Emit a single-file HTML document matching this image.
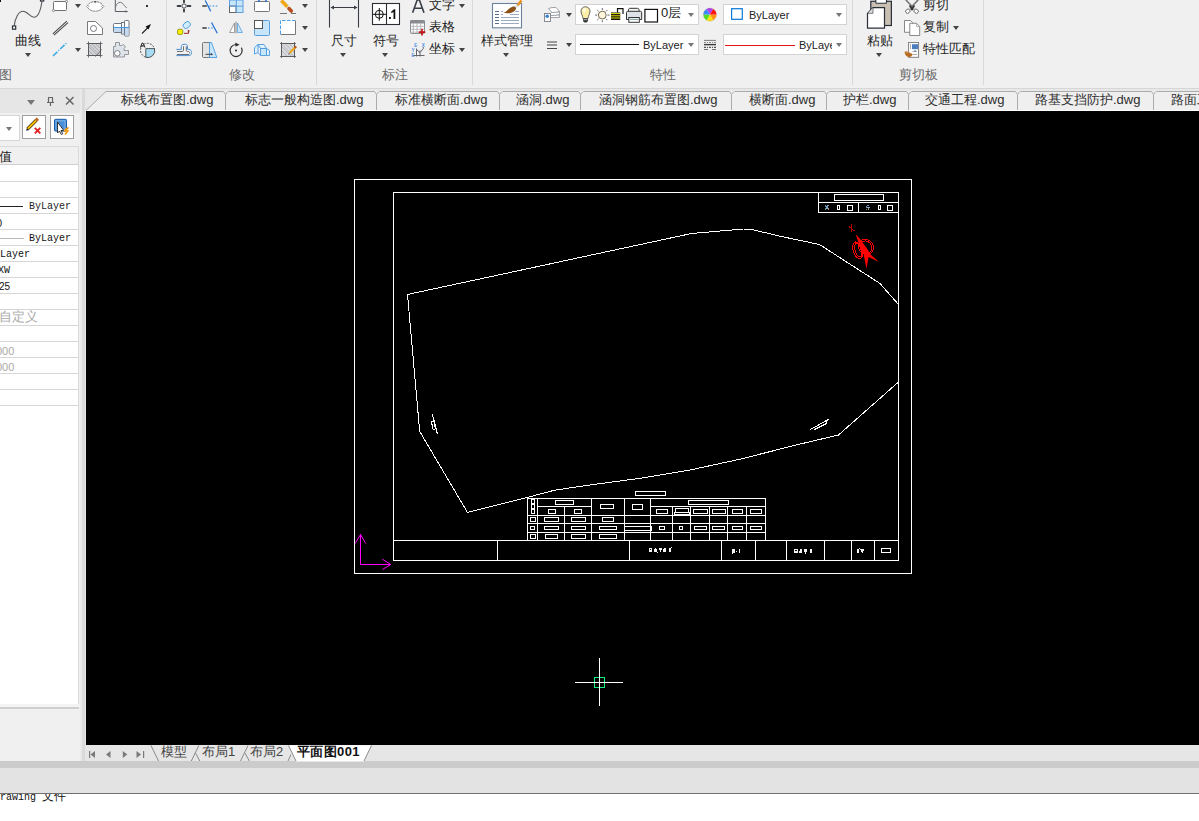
<!DOCTYPE html>
<html><head><meta charset="utf-8">
<style>
*{box-sizing:border-box}
html,body{margin:0;padding:0}
body{width:1199px;height:821px;overflow:hidden;position:relative;background:#f0f0f0;font-family:"Liberation Sans",sans-serif;color:#333}
.a{position:absolute}
.t{position:absolute;white-space:nowrap;font-size:13px;line-height:14px;color:#1e1e1e}
.lbl{position:absolute;white-space:nowrap;font-size:13px;line-height:14px;color:#686868;top:68px}
.sep{position:absolute;top:0;width:1px;height:85px;background:#d9d9d9}
.dd{position:absolute;width:0;height:0;border-left:3.5px solid transparent;border-right:3.5px solid transparent;border-top:4px solid #444}
.combo{position:absolute;background:#fff;border:1px solid #d3d3d3}
.tab{position:absolute;top:93px;white-space:nowrap;font-size:13px;line-height:14px;color:#2e2e2e}
.row{position:absolute;left:0;width:78px;height:16px;border-bottom:1px solid #d4d4d4}
.pv{position:absolute;white-space:nowrap;font-family:"Liberation Mono",monospace;font-size:10px;line-height:12px;color:#222}
</style></head><body>
<!-- ribbon -->
<div class="a" style="left:0;top:0;width:1199px;height:88px;background:#f0f0f0"></div>
<div class="a" style="left:0;top:88px;width:1199px;height:1px;background:#d6d6d6"></div>
<div class="sep" style="left:166px"></div>
<div class="sep" style="left:316px"></div>
<div class="sep" style="left:472px"></div>
<div class="sep" style="left:852px"></div>
<div class="sep" style="left:983px"></div>
<div class="lbl" style="left:-1px">图</div>
<div class="lbl" style="left:229px">修改</div>
<div class="lbl" style="left:382px">标注</div>
<div class="lbl" style="left:650px">特性</div>
<div class="lbl" style="left:899px">剪切板</div>

<!-- layout tab bar -->
<div class="a" style="left:86px;top:745px;width:1113px;height:16px;background:#e6e6e6"></div>
<!-- status -->
<div class="a" style="left:0;top:761px;width:1199px;height:7px;background:#cbcbcb"></div>
<div class="a" style="left:0;top:768px;width:1199px;height:25px;background:#e3e3e3"></div>
<div class="a" style="left:0;top:793px;width:1199px;height:1px;background:#707070"></div>
<div class="a" style="left:0;top:794px;width:1199px;height:27px;background:#fff"></div>


<!-- ribbon texts -->
<div class="t" style="left:15px;top:34px">曲线</div>
<div class="dd" style="left:25px;top:53px"></div>
<div class="dd" style="left:75px;top:4px"></div>
<div class="dd" style="left:75px;top:48px"></div>
<div class="dd" style="left:302px;top:4px"></div>
<div class="dd" style="left:302px;top:26px"></div>
<div class="dd" style="left:302px;top:48px"></div>
<div class="t" style="left:331px;top:34px">尺寸</div>
<div class="dd" style="left:340px;top:53px"></div>
<div class="t" style="left:373px;top:34px">符号</div>
<div class="dd" style="left:382px;top:53px"></div>
<div class="t" style="left:429px;top:-2px">文字</div>
<div class="dd" style="left:459px;top:4px"></div>
<div class="t" style="left:429px;top:20px">表格</div>
<div class="t" style="left:429px;top:42px">坐标</div>
<div class="dd" style="left:459px;top:48px"></div>
<div class="t" style="left:481px;top:34px">样式管理</div>
<div class="dd" style="left:503px;top:53px"></div>
<div class="dd" style="left:566px;top:13px"></div>
<div class="dd" style="left:566px;top:43px"></div>
<div class="combo" style="left:575px;top:4px;width:124px;height:21px"></div>
<div class="combo" style="left:575px;top:34px;width:124px;height:21px"></div>
<div class="combo" style="left:723px;top:4px;width:124px;height:21px"></div>
<div class="combo" style="left:723px;top:34px;width:124px;height:21px;overflow:hidden"></div>
<div class="t" style="left:661px;top:6px;font-size:13px;color:#1a1a1a">0层</div>
<div class="dd" style="left:688px;top:13px;border-top-color:#777"></div>
<div class="t" style="left:643px;top:38px;font-size:11px;color:#222">ByLayer</div>
<div class="dd" style="left:688px;top:43px;border-top-color:#777"></div>
<div class="t" style="left:749px;top:8px;font-size:11px;color:#222">ByLayer</div>
<div class="dd" style="left:836px;top:13px;border-top-color:#777"></div>
<div class="a" style="left:799px;top:38px;width:33px;height:15px;overflow:hidden"><div class="t" style="left:0;top:0;font-size:11px;color:#222">ByLayer</div></div>
<div class="dd" style="left:836px;top:43px;border-top-color:#777"></div>
<div class="t" style="left:867px;top:34px">粘贴</div>
<div class="dd" style="left:876px;top:53px"></div>
<div class="t" style="left:923px;top:-2px">剪切</div>
<div class="t" style="left:923px;top:20px">复制</div>
<div class="dd" style="left:953px;top:26px"></div>
<div class="t" style="left:923px;top:42px">特性匹配</div>
<!-- ribbon icons -->
<svg class="a" style="left:0;top:0" width="1199" height="88" viewBox="0 0 1199 88">
<!-- spline -->
<path d="M14 27C15 18 18.5 11.3 23 11.3C27.5 11.3 30 17.3 34 17.3C39 17.3 41 8 42 1" fill="none" stroke="#5a5a5a" stroke-width="1.1"/>
<rect x="12.5" y="26" width="3.2" height="3.2" fill="#fff" stroke="#2a2f38" stroke-width="1.2"/>
<rect x="40.5" y="-1.5" width="3.2" height="2.5" fill="#fff" stroke="#2a2f38" stroke-width="1.2"/>
<rect x="0" y="0" width="1" height="2" fill="#111"/>
<!-- rect -->
<rect x="53.5" y="1.5" width="13" height="9" rx="1" fill="#fff" stroke="#6e7074"/>
<circle cx="66.5" cy="1.5" r="1.1" fill="#fff" stroke="#6e7074" stroke-width=".8"/>
<circle cx="53.5" cy="10.5" r="1.1" fill="#fff" stroke="#6e7074" stroke-width=".8"/>
<!-- ellipse -->
<ellipse cx="95.2" cy="6.4" rx="7.6" ry="4.8" fill="#fff" stroke="#6e7074" stroke-width=".9" stroke-dasharray="2.5 .6"/>
<rect x="94.2" y="1" width="2" height="1.6" fill="#555"/>
<path d="M87.6 5.2L88.8 6.4L87.6 7.6L86.4 6.4Z" fill="#fff" stroke="#6e7074" stroke-width=".6"/>
<path d="M102.8 5.2L104 6.4L102.8 7.6L101.6 6.4Z" fill="#fff" stroke="#6e7074" stroke-width=".6"/>
<!-- curve chart -->
<path d="M115.3 0V11.5H127.5" fill="none" stroke="#5a5e64" stroke-width="1"/>
<path d="M127.8 11.5L125.5 10.2V12.8Z" fill="#5a5e64"/>
<path d="M115.5 7C116.5 3.5 118.5 2.3 120.5 2.3C123 2.3 124 6.5 126.8 7.8" fill="none" stroke="#6a6e74" stroke-width=".9"/>
<!-- dot -->
<rect x="146" y="5" width="2" height="2" fill="#333"/>
<!-- double line -->
<path d="M52.8 33.8L66.8 21.2M54 35.2L68 22.6" fill="none" stroke="#4a4a4a" stroke-width="1.1"/>
<!-- polygon circle -->
<path d="M87.5 21.5H95.5L102.5 28V34.5H87.5Z" fill="#fff" stroke="#76787c"/>
<circle cx="93.5" cy="28.5" r="3" fill="none" stroke="#76787c"/>
<!-- blocks -->
<path d="M114.5 23.5H121.5V32.5H114.5C113.8 32.5 113.5 32 113.5 31.5V24.5C113.5 24 113.8 23.5 114.5 23.5Z" fill="#fff" stroke="#6e7680"/>
<rect x="114" y="28" width="7" height="4" fill="#c5daf0"/>
<rect x="121.5" y="22.5" width="3" height="11.5" fill="#fff" stroke="#6e7680"/>
<rect x="122" y="28" width="2" height="5.5" fill="#c5daf0"/>
<rect x="124.5" y="20.5" width="4.5" height="15.5" rx=".8" fill="#fff" stroke="#6e7680"/>
<rect x="125" y="28" width="3.5" height="7.5" fill="#c5daf0"/>
<path d="M113.5 27.5H129" stroke="#4a9ae0" stroke-width="1.1"/>
<!-- arrow -->
<path d="M142 33.5L148 27.5" stroke="#222" stroke-width="1.1"/>
<path d="M151 24L145.5 26.5L148.5 29.5Z" fill="#111"/>
<!-- dashed blue line -->
<path d="M53 56L66.5 43" stroke="#3aa8e8" stroke-width="1.5" stroke-dasharray="6 1.5 1 1.5"/>
<!-- hatch -->
<rect x="88.5" y="43.5" width="12" height="12" fill="#cfd1d4" stroke="#6a6a6a" stroke-width=".9"/>
<path d="M89 47L97 55M89 51L93 55M92 44L100.5 52.5M96 44L100.5 48.5M89 44.5L99.5 55" stroke="#a0a2a5" stroke-width=".7"/>
<path d="M86.5 43.5H102.5M86.5 55.5H102.5M88.5 41.5V57.5M100.5 41.5V57.5" stroke="#555" stroke-width=".8"/>
<path d="M95 56.5C97 55 99.5 53 101.5 49" stroke="#555" stroke-width=".8" fill="none"/>
<!-- gear -->
<path d="M113.5 46.5H115.5V42.5H119.5V45.5H121.5L123.5 44.5L125.5 47L124 48.5V50.5H128.5V54.5H124.5V57H113.5Z" fill="#dfe3ea" stroke="#8a8e94" stroke-width=".9" stroke-linejoin="round"/>
<circle cx="117.3" cy="53.3" r="2.8" fill="#fff" stroke="#7a7e84" stroke-width="1"/>
<!-- A circle -->
<circle cx="147.5" cy="50.3" r="7" fill="none" stroke="#444" stroke-width=".9" stroke-dasharray="2 1.2"/>
<path d="M145.8 48.6H154.5A7 7 0 0 1 145.8 57.3Z" fill="#a8dcf5"/>
<path d="M154.5 48.6A7 7 0 0 1 145.8 57.3" fill="none" stroke="#444" stroke-width=".9"/>
<path d="M145.8 48.6H154.5M145.8 48.6V57.3" stroke="#333" stroke-width=".8"/>
<path d="M140.3 47.5L142.2 43H143L145 47.5M141.2 46H144.1" fill="none" stroke="#222" stroke-width="1"/>
<!-- MODIFY group -->
<!-- move -->
<path d="M184 0.3V2.6M184 9.3V11.6M177.6 6H180.7M187.3 6H190.4" stroke="#3a3e44" stroke-width="1.9" stroke-linecap="round"/>
<rect x="182.3" y="4.3" width="3.5" height="3.4" fill="#fff" stroke="#6a6e74" stroke-width=".9"/>
<!-- trim -->
<path d="M202.3 6H206.7" stroke="#666" stroke-width="2"/>
<path d="M209.3 6H218" stroke="#6aaee8" stroke-width="1.6" stroke-dasharray="1.6 1.6"/>
<path d="M205.3 0.5L210.7 11.3" stroke="#1a6ad0" stroke-width="1.2"/>
<!-- array -->
<rect x="229.5" y="0" width="13.5" height="12.5" fill="#c8e6fa" stroke="#5aa0e0"/>
<rect x="229.5" y="6" width="6.5" height="6.5" fill="#fff" stroke="#666"/>
<path d="M236.3 0V12.5M229.5 6.2H243" stroke="#5aa0e0"/>
<!-- stretch box -->
<rect x="254.5" y="1.5" width="15" height="10" rx="1" fill="#fff" stroke="#777"/>
<path d="M259 0V2M266 0V2" stroke="#2a6ed0" stroke-width="1.5"/>
<!-- erase -->
<path d="M281.3 0.5L287.5 7" stroke="#f0a818" stroke-width="3.6"/>
<path d="M287.3 6.8L289.2 8.8" stroke="#e0e0e0" stroke-width="3.6"/>
<path d="M289 8.6L291.3 11" stroke="#b85020" stroke-width="3.6" stroke-linecap="round"/>
<path d="M280 13.5H287M291 13.5H296" stroke="#777" stroke-width="1"/>
<!-- offset copy -->
<rect x="183" y="22.3" width="7.5" height="5.5" rx="2.4" fill="#d0ecfc" stroke="#4a9ae0" stroke-width=".9" transform="rotate(-38 186.7 25)"/>
<rect x="177.5" y="29.2" width="5.3" height="5.3" rx="1.6" fill="#f8ee00" stroke="#8a8a10" stroke-width=".8"/>
<path d="M184 33.3H188.6V30.8" fill="none" stroke="#a02020" stroke-width="1"/>
<path d="M187.2 31.3L188.6 29.8L190 31.3Z" fill="#a02020"/>
<!-- extend -->
<path d="M202.3 28H206.7" stroke="#666" stroke-width="2"/>
<path d="M208 28H213" stroke="#6aaee8" stroke-width="1.6" stroke-dasharray="1.6 1.6"/>
<path d="M211.5 22.5L217.3 33.3" stroke="#1a6ad0" stroke-width="1.2"/>
<!-- mirror -->
<path d="M234.5 23L229.5 32.5H234.5Z" fill="#fff" stroke="#888" stroke-width=".8"/>
<path d="M236 21.5V33.5" stroke="#aaa" stroke-width="1.5"/>
<path d="M237.5 23L242.5 32.5H237.5Z" fill="#c8e6fa" stroke="#5aa0e0" stroke-width=".8"/>
<!-- scale -->
<rect x="254.5" y="20.5" width="15" height="15" rx="1" fill="#c8e6fa" stroke="#5aa0e0"/>
<rect x="254.5" y="20.5" width="8" height="8" fill="#fff" stroke="#555"/>
<!-- offset dashed -->
<rect x="280.5" y="20.5" width="15" height="14" fill="#fff" stroke="none"/>
<path d="M280.5 34.5H295.5V20.5" fill="none" stroke="#777" stroke-width="1"/>
<path d="M280.5 34V20.5H295" fill="none" stroke="#4aa0ea" stroke-width="1" stroke-dasharray="3.5 1.5"/>
<!-- fillet -->
<path d="M176.3 49.4H181.3V46.5C181.3 45 182.5 44.3 184 44.3H185.5C187 44.3 187.5 45.2 187.5 46.5V49.3H189C190.5 49.6 191.6 51 191.6 52.5C191.6 54.3 190.5 55.6 188.8 55.6H176.3" fill="none" stroke="#4a90d8" stroke-width="1"/>
<path d="M177 51.5H182.3C183 51.5 183.5 51 183.5 50.3V46.3M186.3 46.3V50.3C186.3 51 186.8 51.5 187.5 51.5H188.5C189.3 51.5 189.7 52.3 189.7 53.5M177 54.5H189" fill="none" stroke="#6a6e74" stroke-width="1"/>
<!-- stretch -->
<path d="M209.5 42.5H203.5C202.9 42.5 202.5 42.9 202.5 43.5V56.5C202.5 57.1 202.9 57.5 203.5 57.5H209.5Z" fill="#e3e3e3" stroke="#6a6a6a" stroke-width=".9"/>
<path d="M209.5 42.5H211.5L216.8 57.5H209.5Z" fill="#c8e6fa" stroke="#4a9ae0" stroke-width=".9"/>
<path d="M205.5 54.3H211.5" stroke="#333" stroke-width=".9"/>
<path d="M213 54.3L211 53V55.6Z" fill="#333"/>
<!-- rotate -->
<path d="M236 44.5A6 6 0 1 0 241.4 47.6" fill="none" stroke="#333" stroke-width="1.2"/>
<path d="M235.3 42.6L239.6 44.8L235.5 46.8Z" fill="#333"/>
<circle cx="236" cy="50.5" r="1" fill="#222"/>
<!-- 3d blocks -->
<g fill="#c8e6fa" stroke="#4a9ae0" stroke-width=".9" stroke-linejoin="round">
<path d="M254.5 47.5L258 44.5V52.5L254.5 54Z" fill="#dff0fb"/>
<path d="M258 44.5H264L266.5 48.5H260.5Z" fill="#dff0fb"/>
<rect x="260.5" y="48.5" width="6" height="7"/>
<path d="M266.5 48.5L269.5 50.5V55.5L266.5 55.5Z" fill="#dff0fb"/>
<path d="M258 52.5L260.5 55.5"/>
</g>
<!-- hatch edit -->
<rect x="281.5" y="43.5" width="13" height="13" fill="#d8dadd" stroke="#6a6a6a" stroke-width=".9"/>
<path d="M282 47L291.5 56.5M282 51L287.5 56.5M285.5 44L294.5 53M289.5 44L294.5 49M282 44.5L294 56.5" stroke="#a5a7aa" stroke-width=".7"/>
<path d="M280 43.5H296M280 56.5H296M281.5 42V58M294.5 42V58" stroke="#555" stroke-width=".8"/>
<path d="M289.5 53L295 47.5" stroke="#f0a818" stroke-width="2.2"/>
<path d="M294.6 48L296.2 46.4" stroke="#bb5520" stroke-width="2.2"/>
<path d="M288.5 54.5L289.5 53" stroke="#555" stroke-width=".8"/>
<!-- ANNOTATE -->
<path d="M329.5 0V27.6M358.5 0V27.6M331 7.5H357" stroke="#3a3e44" stroke-width="1.1"/>
<path d="M330.5 7.5L334 5.5V9.5ZM357.5 7.5L354 5.5V9.5Z" fill="#3a3e44"/>
<rect x="372.5" y="3.5" width="27" height="21" fill="#fff" stroke="#2a2e34" stroke-width="1.1"/>
<path d="M386.5 3.5V24.5" stroke="#2a2e34" stroke-width="1.1"/>
<circle cx="379.3" cy="14.3" r="4" fill="none" stroke="#111" stroke-width="1"/>
<path d="M379.3 8V20.7M372.5 14.3H386.5" stroke="#111" stroke-width="1"/>
<rect x="389" y="17" width="1.8" height="2" fill="#111"/>
<path d="M391.3 11.5L394 9.3H395.3V19H393.5V12L391.3 13.3Z" fill="#111"/>
<path d="M412.6 12.8L417.2 0H419.4L424 12.8M414.3 8.3H422.3" fill="none" stroke="#3a3f48" stroke-width="1.6"/>
<!-- table -->
<rect x="410.5" y="20.5" width="14" height="13" rx=".8" fill="#fff" stroke="#8a8c90"/>
<rect x="410.2" y="20.2" width="14.5" height="3.3" rx=".8" fill="#8a8c90"/>
<path d="M410.5 26.3H424.5M410.5 29.3H424.5M410.5 32.2H424.5M413.3 23V33.5M417 23V33.5M420.7 23V33.5" stroke="#a8aaae" stroke-width=".8"/>
<path d="M418.8 32.1H425.3M422 28.8V35.4" stroke="#c41212" stroke-width="1.6"/>
<!-- coord -->
<path d="M416.5 48.5V56.5M413 55.5H424.5M420 50.5V56.5M416.5 49.5L420 52.5L423.3 48.5V47" fill="none" stroke="#555a60" stroke-width=".9"/>
<g fill="#4a8ae0" font-family="Liberation Sans" font-size="4.5" font-weight="bold">
<text x="414.2" y="47.3">E</text><text x="421.7" y="47.3">X</text><text x="411.5" y="51.5">Y</text><text x="411.5" y="57">E</text>
</g>
<!-- PROPERTIES -->
<rect x="492.5" y="3.5" width="29" height="24.3" fill="#fff" stroke="#6a829c" stroke-width="1.1"/>
<path d="M495 11.5H499M495 14.5H499M495 17.5H499M495 20.5H499M495 23.5H499" stroke="#5a7088" stroke-width="1.1"/>
<path d="M501 11.5H503M515 11.5H519M501 14.5H503M510 14.5H519M501 17.5H519M501 20.5H519M501 23.5H519" stroke="#9aaac0" stroke-width="1"/>
<path d="M517 6L521.5 0.5" stroke="#e89020" stroke-width="2.6"/>
<path d="M514.5 8.5L517.5 5.2" stroke="#ddd" stroke-width="2.6"/>
<path d="M514.5 6.5C516.5 8 516.5 9 514.5 11C511 14 506 13.5 503.5 12.8C506.5 12 507.5 9.5 510 8C511.5 7 513 6.2 514.5 6.5Z" fill="#8a5218"/>
<!-- layer icon -->
<path d="M548.5 8.5L552 7.5H556L559.5 11.5L556 12.5H552Z" fill="#fff" stroke="#8a9098" stroke-width=".8"/>
<path d="M551 12.5L559.5 12V14.5L556 15.5H551" fill="#fff" stroke="#8a9098" stroke-width=".8"/>
<path d="M551 15.5L559.5 15V17.5H551" fill="#fff" stroke="#8a9098" stroke-width=".8"/>
<rect x="544.5" y="13.5" width="6" height="8" fill="#fff" stroke="#6a7078" stroke-width=".8"/>
<circle cx="547.2" cy="16.2" r="1.8" fill="#3a80d0"/>
<path d="M547 45H557M547 48.5H557M547 42H557" stroke="#444" stroke-width="1.2"/>
<!-- layer combo icons -->
<path d="M581 11.2C581 8.5 583 6.8 585.5 6.8C588 6.8 590 8.5 590 11.2C590 14 588.3 15.2 588 18.5H583C582.7 15.2 581 14 581 11.2Z" fill="#fbefa8" stroke="#555" stroke-width=".9"/>
<ellipse cx="584.5" cy="10" rx="1.6" ry="2.2" fill="#fffbe0"/>
<path d="M583 18.5H588V21L586.5 22.5H584.5L583 21Z" fill="#333"/>
<rect x="583.5" y="19.2" width="4" height="1" fill="#bbb"/>
<circle cx="602.3" cy="15.1" r="3.9" fill="#fff6dc" stroke="#6a5a4a" stroke-width=".9"/>
<path d="M602.3 8V10M602.3 20.2V22.2M595 15.1H597.2M607.4 15.1H609.6M597.2 10L598.6 11.4M606 18.8L607.4 20.2M597.2 20.2L598.6 18.8M606 11.4L607.4 10" stroke="#444" stroke-width=".8"/>
<rect x="611" y="12.5" width="9.2" height="7.5" fill="#111"/>
<path d="M611 13.6H620.2M611 15.8H620.2M611 18H620.2" stroke="#e8e000" stroke-width="1"/>
<path d="M617.5 12.5V8.6H623V14" fill="none" stroke="#111" stroke-width="1.2"/>
<path d="M628.5 11.5V9.5C628.5 8.7 629.3 8.3 630 8.3H637.5C638.3 8.3 639 8.7 639 9.5V11.5" fill="#f4f4f4" stroke="#333" stroke-width="1"/>
<path d="M626.5 12.5C626.5 11.8 627 11.3 627.7 11.3H640.5C641.2 11.3 641.7 11.8 641.7 12.5V19.5H626.5Z" fill="#dde2e8" stroke="#333" stroke-width="1"/>
<rect x="628.8" y="17.5" width="10.5" height="4.8" fill="#fff" stroke="#333" stroke-width="1"/>
<rect x="629.8" y="18.8" width="8.5" height="1.2" fill="#8aa"/>
<rect x="644.9" y="9.4" width="12.6" height="12.6" fill="#fff" stroke="#111" stroke-width="1.2"/>
<!-- linetype line -->
<path d="M580 44.5H639" stroke="#111" stroke-width="1"/>
<!-- color wheel -->
<g><path d="M709.9 14.6L716.40 14.60A6.5 6.5 0 0 1 713.15 20.23Z" fill="#ff9010"/><path d="M709.9 14.6L713.15 20.23A6.5 6.5 0 0 1 706.65 20.23Z" fill="#ffe010"/><path d="M709.9 14.6L706.65 20.23A6.5 6.5 0 0 1 703.40 14.60Z" fill="#50e020"/><path d="M709.9 14.6L703.40 14.60A6.5 6.5 0 0 1 706.65 8.97Z" fill="#3a88ff"/><path d="M709.9 14.6L706.65 8.97A6.5 6.5 0 0 1 713.15 8.97Z" fill="#b040f0"/><path d="M709.9 14.6L713.15 8.97A6.5 6.5 0 0 1 716.40 14.60Z" fill="#ff1010"/><circle cx="709.9" cy="14.6" r="6.5" fill="none" stroke="#a08060" stroke-width=".4" opacity=".6"/></g>
<rect x="731.6" y="8.7" width="10.7" height="10.6" fill="#fff" stroke="#0a78d8" stroke-width="1.2"/>
<!-- lineweight icon -->
<path d="M704 40.4H716" stroke="#7a7a7a" stroke-width="1"/>
<path d="M704 42.5H716" stroke="#888" stroke-width="1" stroke-dasharray="2 1 1 1"/>
<path d="M704 44.6H716" stroke="#3a3a3a" stroke-width="1.4"/>
<path d="M704 47.4H716" stroke="#555" stroke-width="1.2" stroke-dasharray="2 1 1 1"/>
<path d="M704 49.5H716" stroke="#777" stroke-width="1" stroke-dasharray="4 4 4"/>
<path d="M725 45.5H795" stroke="#e81010" stroke-width="1.1"/>

<!-- CLIPBOARD -->
<rect x="870.8" y="1.3" width="20.6" height="24.2" fill="#c9bfb2" stroke="#2a2f38" stroke-width="1.2"/>
<path d="M875.8 -1V2.2C875.8 2.8 876.2 3.2 876.8 3.2H885.5C886.1 3.2 886.5 2.8 886.5 2.2V-1" fill="#fff" stroke="#2a2f38" stroke-width="1.1"/>
<path d="M867.5 13.3L873 7.6H884.5V28.2H867.5Z" fill="#fff" stroke="#2a2f38" stroke-width="1.2" stroke-linejoin="round"/>
<path d="M867.8 13.3H873V7.8" fill="#ddd" stroke="#2a2f38" stroke-width=".6"/>
<!-- scissors -->
<path d="M905.5 -0.5L914 8.5M918.5 -0.5L910 8.5" stroke="#777" stroke-width="1.6"/>
<path d="M909.5 5.5L913 10M914.5 5.5L911 10" stroke="#333" stroke-width="1.6"/>
<ellipse cx="907.8" cy="11.2" rx="2.3" ry="2" fill="#fff" stroke="#666" stroke-width=".9" transform="rotate(-40 907.8 11.2)"/>
<ellipse cx="916.2" cy="11.2" rx="2.3" ry="2" fill="#fff" stroke="#666" stroke-width=".9" transform="rotate(40 916.2 11.2)"/>
<!-- copy -->
<path d="M904.5 20.5H910.5L912.5 22.5V32.3H904.5Z" fill="#fff" stroke="#7a7a7a" stroke-width=".9" stroke-linejoin="round"/>
<path d="M909.8 23.3H916.5L919.7 26.5V35.5H909.8Z" fill="#fff" stroke="#7a7a7a" stroke-width=".9" stroke-linejoin="round"/>
<path d="M916.5 23.3V26.5H919.7" fill="none" stroke="#999" stroke-width=".7"/>
<!-- match prop -->
<rect x="908.6" y="42.5" width="10" height="14.8" fill="#fff" stroke="#777" stroke-width=".9"/>
<rect x="912" y="44.2" width="6" height="5" fill="#4a7ec0"/>
<path d="M910.5 44V49M912.5 51.5H917M912.5 54.5H917" stroke="#888" stroke-width=".7"/>
<path d="M915 50V52" stroke="#2a5a98" stroke-width=".8"/>
<path d="M904.5 52C905.5 51 907 51 908 52L912.5 54C912.5 56 910.5 57.5 908.5 57C906.5 56.5 905 55 904.5 52Z" fill="#b86a20"/>
<path d="M905 51.5L908 53" stroke="#e8c090" stroke-width=".6"/>
</svg>

<!-- tab strip -->
<div class="a" style="left:80px;top:89px;width:1119px;height:22px;background:#e8e8e8"></div>

<!-- left panel -->
<div class="a" style="left:0;top:89px;width:80px;height:672px;background:#f0f0f0"></div>
<div class="a" style="left:0;top:89px;width:80px;height:24px;background:#e6e6e6"></div>
<div class="a" style="left:80px;top:89px;width:2px;height:672px;background:#e9e9e9"></div><div class="a" style="left:82px;top:89px;width:3px;height:672px;background:#dadada"></div><div class="a" style="left:85px;top:89px;width:1px;height:672px;background:#e6e6e6"></div>

<!-- file tabs -->
<svg class="a" style="left:80px;top:88px" width="1119" height="23" viewBox="80 88 1119 23">
<path d="M86 111L106 91.5H1199V111Z" fill="#efefef"/>
<path d="M87 110.5H1199" stroke="#fff" stroke-width="1"/>
<path d="M86 110.5L106 91.5H1199" fill="none" stroke="#ababab" stroke-width="1"/>
<g stroke-width="1" fill="none">
<path d="M223.5 91.5H228.5" stroke="#efefef"/><path d="M225.5 110V94.5M223.5 91.5L225.5 94.5L228 91.5" stroke="#ababab"/>
<path d="M374.5 91.5H379.5" stroke="#efefef"/><path d="M376.5 110V94.5M374.5 91.5L376.5 94.5L379 91.5" stroke="#ababab"/>
<path d="M497.5 91.5H502.5" stroke="#efefef"/><path d="M499.5 110V94.5M497.5 91.5L499.5 94.5L502 91.5" stroke="#ababab"/>
<path d="M578.5 91.5H583.5" stroke="#efefef"/><path d="M580.5 110V94.5M578.5 91.5L580.5 94.5L583 91.5" stroke="#ababab"/>
<path d="M729.5 91.5H734.5" stroke="#efefef"/><path d="M731.5 110V94.5M729.5 91.5L731.5 94.5L734 91.5" stroke="#ababab"/>
<path d="M824.5 91.5H829.5" stroke="#efefef"/><path d="M826.5 110V94.5M824.5 91.5L826.5 94.5L829 91.5" stroke="#ababab"/>
<path d="M906.5 91.5H911.5" stroke="#efefef"/><path d="M908.5 110V94.5M906.5 91.5L908.5 94.5L911 91.5" stroke="#ababab"/>
<path d="M1015.5 91.5H1020.5" stroke="#efefef"/><path d="M1017.5 110V94.5M1015.5 91.5L1017.5 94.5L1020 91.5" stroke="#ababab"/>
<path d="M1151.5 91.5H1156.5" stroke="#efefef"/><path d="M1153.5 110V94.5M1151.5 91.5L1153.5 94.5L1156 91.5" stroke="#ababab"/>
</g>
</svg>
<div class="tab" style="left:121px">标线布置图.dwg</div>
<div class="tab" style="left:245px">标志一般构造图.dwg</div>
<div class="tab" style="left:395px">标准横断面.dwg</div>
<div class="tab" style="left:516px">涵洞.dwg</div>
<div class="tab" style="left:599px">涵洞钢筋布置图.dwg</div>
<div class="tab" style="left:749px">横断面.dwg</div>
<div class="tab" style="left:843px">护栏.dwg</div>
<div class="tab" style="left:925px">交通工程.dwg</div>
<div class="tab" style="left:1035px">路基支挡防护.dwg</div>
<div class="tab" style="left:1171px">路面工程.dwg</div>
<!-- panel header -->
<div class="dd" style="left:27px;top:100px;border-left-width:4.5px;border-right-width:4.5px;border-top:5px solid #777"></div>
<svg class="a" style="left:40px;top:92px" width="40" height="20" viewBox="40 92 40 20">
<path d="M48 97.5H53M48.5 97.5V102.5H52.5V97.5M47 102.5H54M50.5 102.5V106" fill="none" stroke="#666" stroke-width="1.2"/>
<path d="M66 97L73.5 104.5M73.5 97L66 104.5" stroke="#666" stroke-width="1.5"/>
</svg>
<div class="combo" style="left:-2px;top:115px;width:22px;height:26px;border-color:#d6d6d6"></div>
<div class="dd" style="left:6px;top:127px;border-top-color:#777"></div>
<div class="a" style="left:22px;top:115px;width:24px;height:24px;background:#fff;border:1px solid #9f9f9f"></div>
<div class="a" style="left:50px;top:115px;width:24px;height:24px;background:#fff;border:1px solid #9f9f9f"></div>
<svg class="a" style="left:22px;top:115px" width="52" height="25" viewBox="22 115 52 25">
<path d="M27.5 129L36 120.5" stroke="#3a2a10" stroke-width="3.2"/>
<path d="M27.5 129L36 120.5" stroke="#f8c000" stroke-width="1.8"/>
<path d="M36 120.5L37.8 118.7" stroke="#b86020" stroke-width="3.2"/>
<path d="M26 130.8L27 128L29 130Z" fill="#222"/>
<path d="M34.8 127.8L40.3 133.3M40.3 127.8L34.8 133.3" stroke="#e02020" stroke-width="1.9"/>
<rect x="54.5" y="119.3" width="12" height="11.8" rx="1" fill="#4a90d8" stroke="#1a5aa8" stroke-width="1"/>
<rect x="56" y="120.8" width="9" height="8.8" fill="none" stroke="#9ac8f0" stroke-width=".6"/>
<path d="M57.5 122V133L59.5 131L61.3 134.5L62.8 133.8L61 130.5H63.8Z" fill="#fff" stroke="#222" stroke-width=".9" stroke-linejoin="round"/>
<path d="M68.5 127.5L64.5 130.8H68L65 134.5" fill="none" stroke="#f29a10" stroke-width="1.8" stroke-linejoin="round"/>
</svg>
<!-- property grid -->
<div class="a" style="left:-1px;top:146px;width:80px;height:559px;background:#fff;border:1px solid #d9d9d9;border-left:none"></div>
<div class="a" style="left:0;top:146px;width:78px;height:19px;background:#f0f0f0;border-top:1px solid #dadada;border-bottom:1px solid #d0d0d0"></div>
<div class="t" style="left:-1px;top:150px;font-size:13px;color:#222">值</div>
<div class="a" style="left:0;top:166px;width:78px;height:240px;background:repeating-linear-gradient(to bottom,#fff 0,#fff 15px,#d6d6d6 15px,#d6d6d6 16px)"></div>
<div class="a" style="left:0;top:206px;width:23px;height:1px;background:#222"></div>
<div class="pv" style="left:29px;top:201px">ByLayer</div>
<div class="pv" style="left:-4px;top:217px;font-family:'Liberation Sans';font-size:11px">0</div>
<div class="a" style="left:0;top:238px;width:24px;height:1px;background:#bbb"></div>
<div class="pv" style="left:29px;top:233px;color:#111">ByLayer</div>
<div class="pv" style="left:0;top:249px;color:#111">Layer</div>
<div class="pv" style="left:-2px;top:265px;color:#111">XW</div>
<div class="pv" style="left:-1px;top:281px;color:#111;font-family:'Liberation Sans'">25</div>
<div class="t" style="left:-1px;top:310px;font-size:13px;color:#aaa">自定义</div>
<div class="pv" style="left:-4px;top:345px;color:#aaa;font-family:'Liberation Sans';font-size:11px">000</div>
<div class="pv" style="left:-4px;top:361px;color:#aaa;font-family:'Liberation Sans';font-size:11px">000</div>
<div class="a" style="left:0;top:704px;width:79px;height:3px;background:#f4f4f4"></div>
<div class="a" style="left:0;top:707px;width:79px;height:2px;background:#cfcfcf"></div>
<!-- layout tabs -->
<svg class="a" style="left:86px;top:745px" width="1113" height="17" viewBox="86 745 1113 17">

<g fill="#7a7a7a">
<rect x="89" y="751" width="1.2" height="7"/><path d="M90.5 754.5L95 751V758Z"/>
<path d="M106 754.5L110.5 751V758Z"/>
<path d="M127.3 754.5L122.8 751V758Z"/>
<path d="M141 754.5L136.5 751V758Z"/><rect x="143" y="751" width="1.2" height="7"/>
</g>
<path d="M288.5 745.5L296 761.5H364L371.5 745.5Z" fill="#fff"/>
<g fill="none" stroke="#8a8a8a" stroke-width="1">
<path d="M151 745.5L158.5 761M191.3 761L198.8 745.5"/>
<path d="M195.5 753L199.8 761M240.5 761L248 745.5"/>
<path d="M245 753L249.3 761M288 761L291 754.5"/>
<path d="M288.5 745.5L296 761M364 761L371.5 745.5"/>
</g>
</svg>
<div class="t" style="left:161px;top:745px;color:#444">模型</div>
<div class="t" style="left:202px;top:745px;color:#444">布局1</div>
<div class="t" style="left:250px;top:745px;color:#444">布局2</div>
<div class="t" style="left:297px;top:745px;color:#111;font-weight:bold;letter-spacing:.35px">平面图001</div>
<!-- command line -->
<div class="a" style="left:0;top:794px;width:200px;height:20px;overflow:hidden"><div class="a" style="left:-6px;top:-4px;font-family:'Liberation Mono',monospace;font-size:10px;line-height:14px;color:#111;white-space:nowrap">drawing <span style="font-size:12px">文件</span></div></div>
<div class="a" style="left:0;top:793px;width:1199px;height:1px;background:#707070"></div>

<!-- canvas -->
<div class="a" style="left:86px;top:111px;width:1113px;height:634px;background:#000"></div>

<svg class="a" style="left:86px;top:111px" width="1113" height="634" viewBox="86 111 1113 634">
<g fill="none" stroke="#fff" stroke-width="1" shape-rendering="crispEdges">
<rect x="354.5" y="179.5" width="557" height="394"/>
<rect x="393.5" y="192.5" width="505" height="368"/>
<path d="M393 540.5H899"/>
<path d="M497.5 540V561"/>
<path d="M629.5 540V561"/>
<path d="M721.5 540V561"/>
<path d="M755.5 540V561"/>
<path d="M786.5 540V561"/>
<path d="M824.5 540V561"/>
<path d="M851.5 540V561"/>
<path d="M874.5 540V561"/>
<rect x="881.5" y="548.5" width="9" height="4"/>
<rect x="818.5" y="192.5" width="80" height="20"/>
<path d="M818 202.5H899"/>
<path d="M858.5 202V213"/>
<rect x="834.5" y="194.5" width="49" height="6"/>
<rect x="837.5" y="205.5" width="2" height="4"/>
<rect x="847.5" y="205.5" width="5" height="5"/>
<rect x="878.5" y="205.5" width="2" height="4"/>
<rect x="887.5" y="205.5" width="5" height="5"/>
<path d="M527 498.5H766"/>
<path d="M537 506.5H592"/>
<path d="M650 506.5H766"/>
<path d="M527 515.5H766"/>
<path d="M527 523.5H766"/>
<path d="M527 532.5H766"/>
<path d="M527.5 498V541"/>
<path d="M537.5 498V541"/>
<path d="M591.5 498V541"/>
<path d="M624.5 498V541"/>
<path d="M650.5 498V541"/>
<path d="M765.5 498V541"/>
<path d="M564.5 506V541"/>
<path d="M672.5 506V541"/>
<path d="M690.5 506V541"/>
<path d="M709.5 506V541"/>
<path d="M727.5 506V541"/>
<path d="M746.5 506V541"/>
<rect x="635.5" y="491.5" width="30" height="4"/>
<rect x="531.5" y="499.5" width="3" height="4"/>
<rect x="531.5" y="504.5" width="3" height="4"/>
<rect x="531.5" y="509.5" width="3" height="4"/>
<rect x="555.5" y="500.5" width="18" height="4"/>
<rect x="548.5" y="509.5" width="7" height="4"/>
<rect x="574.5" y="509.5" width="7" height="4"/>
<rect x="600.5" y="504.5" width="13" height="4"/>
<rect x="632.5" y="504.5" width="10" height="5"/>
<rect x="688.5" y="500.5" width="40" height="4"/>
<rect x="656.5" y="509.5" width="11" height="4"/>
<rect x="693.5" y="509.5" width="14" height="4"/>
<rect x="712.5" y="509.5" width="13" height="4"/>
<rect x="732.5" y="509.5" width="10" height="4"/>
<rect x="750.5" y="509.5" width="11" height="4"/>
<rect x="675.5" y="508.5" width="13" height="4"/>
<rect x="674.5" y="512.5" width="15" height="2"/>
<rect x="530.5" y="517.5" width="5" height="4"/>
<rect x="544.5" y="517.5" width="14" height="4"/>
<rect x="571.5" y="517.5" width="14" height="4"/>
<rect x="602.5" y="517.5" width="11" height="4"/>
<rect x="530.5" y="526.5" width="4" height="3"/>
<rect x="544.5" y="526.5" width="14" height="3"/>
<rect x="571.5" y="526.5" width="14" height="3"/>
<rect x="599.5" y="526.5" width="17" height="3"/>
<rect x="624.5" y="526.5" width="27" height="4"/>
<rect x="659.5" y="526.5" width="5" height="3"/>
<rect x="679.5" y="526.5" width="3" height="3"/>
<rect x="694.5" y="526.5" width="12" height="3"/>
<rect x="712.5" y="526.5" width="12" height="3"/>
<rect x="732.5" y="526.5" width="10" height="3"/>
<rect x="750.5" y="526.5" width="11" height="3"/>
<rect x="530.5" y="534.5" width="5" height="4"/>
<rect x="545.5" y="534.5" width="12" height="4"/>
<rect x="571.5" y="534.5" width="14" height="4"/>
<rect x="599.5" y="534.5" width="17" height="4"/>
</g>
<g fill="none" stroke="#fff" stroke-width="1" shape-rendering="crispEdges">
<polyline points="407.5,294.5 691.5,233.5 743.5,229 750,229 779,236 819.5,244.5 880,283.5 898.5,304.5"/>
<polyline points="898.5,382 838.5,435 799,444.3 740,459.2 690,470 640,478.3 590,485 554.5,490.2 527,497.5 467.5,512.5 419.7,431.4 407.5,294.5"/>
<path d="M432.4 414.2L437.5 434.4M431.3 421.6L434.3 421L435.3 429L433.2 429.3Z"/>
<path d="M810.5 429.5L828.5 419.4M814.5 429.5L826.8 423.3L827 419.6"/>
</g>
<g fill="#f4f4f4" stroke="none" shape-rendering="crispEdges">
<path d="M649 548H652V552H649ZM650 549V550H651V549Z" fill-rule="evenodd"/>
<path d="M655 548H656V549H657V552H654V549H655Z"/><rect x="657" y="552" width="1" height="1"/>
<path d="M659 548H662V550H661V552H660V550H659Z"/>
<path d="M664 548H666V552H663V549H664Z"/>
<rect x="669" y="548" width="2" height="4"/><rect x="671" y="547" width="1" height="1"/>
<path d="M732 549H735V553H733V554H732Z"/><rect x="736" y="551" width="1" height="1"/><rect x="739" y="549" width="1" height="4"/>
<path d="M794 549H798V553H794ZM795 550V551H797V550Z" fill-rule="evenodd"/>
<path d="M800 549H802V553H799V551H800Z"/>
<path d="M804 549H807V552H806V554H805V552H804Z"/>
<rect x="810" y="549" width="2" height="4"/>
<rect x="857" y="549" width="2" height="4"/><rect x="859" y="548" width="1" height="1"/>
<path d="M860 549H864V551H863V553H862V552H861V550H860Z"/>
</g>
<g shape-rendering="crispEdges">
<rect x="825" y="205" width="1" height="2" fill="#5a8ab0"/><rect x="827" y="205" width="2" height="1" fill="#8a9ab0"/><rect x="826" y="206" width="2" height="3" fill="#7aa0c8"/><rect x="825" y="208" width="1" height="2" fill="#5a9a70"/><rect x="828" y="208" width="1" height="2" fill="#b09060"/>
<rect x="867" y="205" width="2" height="1" fill="#7a8aa0"/><rect x="866" y="206" width="1" height="2" fill="#5a8ab0"/><rect x="867" y="207" width="3" height="1" fill="#90a8c8"/><rect x="868" y="208" width="1" height="2" fill="#a09070"/><rect x="866" y="209" width="1" height="1" fill="#5a9a70"/>
</g>
<!-- compass -->
<g stroke="#ff0000" fill="none" stroke-width="1" shape-rendering="crispEdges">
<ellipse cx="857.8" cy="250.3" rx="4.6" ry="8.6" transform="rotate(-18 857.8 250.3)"/>
<ellipse cx="858.2" cy="250.3" rx="3" ry="7" transform="rotate(-18 858.2 250.3)"/>
<ellipse cx="866" cy="247" rx="7.2" ry="8" transform="rotate(-40 866 247)"/>
<ellipse cx="866" cy="247" rx="5.6" ry="6.4" transform="rotate(-40 866 247)"/>
<path d="M849 226.5L854.5 231M851.5 224.5L852 232" stroke="#b00000"/>
</g>
<polygon fill="#ff0000" points="855.5,234 860.5,239.5 868,250 870,254 879,262 868.5,257 866.5,269 863.5,254 858.5,242.5"/>
<!-- ucs -->
<g stroke="#ff00ff" fill="none" stroke-width="1" shape-rendering="crispEdges">
<path d="M360.5 534V565M360 564.5H391"/>
</g>
<g stroke="#ff00ff" fill="none" stroke-width="1">
<path d="M355.2 543.5L360.5 534.5L365.7 543.5M382.4 559.2L390.8 564.5L382.4 569.5"/>
</g>
<!-- crosshair -->
<g shape-rendering="crispEdges" fill="none">
<rect x="594.5" y="677.5" width="10" height="10" stroke="#14f07c"/>
<path d="M599.5 658V706M575 682.5H623" stroke="#fff"/>
</g>
</svg>
</body></html>
